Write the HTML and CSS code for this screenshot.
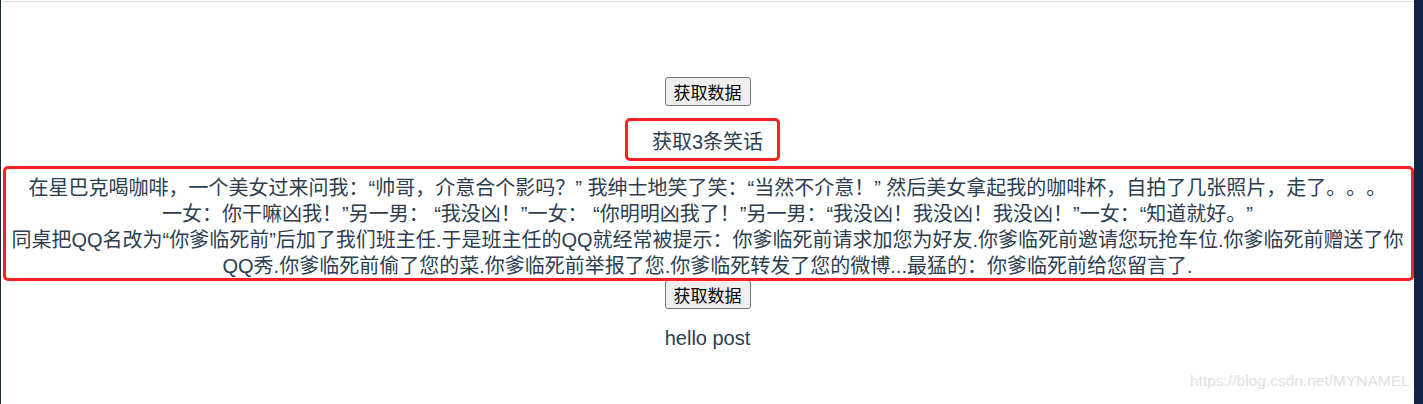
FILE: index.html
```html
<!DOCTYPE html>
<html lang="zh-CN">

<head>
    <meta charset="UTF-8">
    <meta name="viewport" content="width=device-width, initial-scale=1.0">
    <title>获取数据</title>
    <link rel="stylesheet" href="styles.css">
</head>

<body>
    <div class="page">
        <div class="topline"></div>
        <div id="app">
            <button type="button">获取数据</button>
            <p class="title">获取3条笑话<span class="mark mark-title"></span></p>
            <div class="jokes">
                <div>在星巴克喝咖啡，一个美女过来问我：“帅哥，介意合个影吗？” 我绅士地笑了笑：“当然不介意！” 然后美女拿起我的咖啡杯，自拍了几张照片，走了。。。</div>
                <div>一女：你干嘛凶我！”另一男： “我没凶！”一女： “你明明凶我了！”另一男：“我没凶！我没凶！我没凶！”一女：“知道就好。”</div>
                <div>同桌把QQ名改为“你爹临死前”后加了我们班主任.于是班主任的QQ就经常被提示：你爹临死前请求加您为好友.你爹临死前邀请您玩抢车位.你爹临死前赠送了你QQ秀.你爹临死前偷了您的菜.你爹临死前举报了您.你爹临死转发了您的微博...最猛的：你爹临死前给您留言了.</div>
                <span class="mark mark-jokes"></span>
            </div>
            <button type="button">获取数据</button>
            <p class="hello">hello post</p>
        </div>
        <div class="watermark">https://blog.csdn.net/MYNAMEL</div>
    </div>
</body>

</html>
```

FILE: styles.css
```css
body {
    margin: 0;
    height: 404px;
    overflow: hidden;
    background-color: #0d2444;
    border-left: 1px solid #1c2a31;
}

.page {
    position: relative;
    width: 1413px;
    height: 404px;
    background-color: #fff;
    overflow: hidden;
}

.topline {
    height: 1px;
    margin: 1px 0 0 1px;
    background-color: #dcdcdc;
}

#app {
    padding-top: 75px;
    text-align: center;
    color: #2c3e50;
    font-family: "Liberation Sans", "Noto Sans CJK SC", sans-serif;
    font-size: 20px;
    line-height: 26px;
    text-spacing-trim: space-all;
}

button {
    display: block;
    margin: 0 auto;
    box-sizing: border-box;
    height: 29px;
    padding: 0 8px;
    font-family: "Noto Sans CJK SC", sans-serif;
    font-size: 17px;
    line-height: 26px;
    color: #000;
    background-color: #efefef;
    border: 1px solid #767676;
    border-radius: 3px;
}

p {
    margin: 0;
}

.title {
    position: relative;
    margin-top: 23px;
}

.jokes {
    position: relative;
    margin: 20px 0 1px;
}

.hello {
    margin-top: 16px;
}

/* red marks drawn over the screenshot */
.mark {
    position: absolute;
    border: 3px solid #ff2020;
    border-radius: 5px;
}

.mark-title {
    left: 624px;
    top: -11px;
    width: 149px;
    height: 37px;
}

.mark-jokes {
    left: 2px;
    right: 0;
    top: -9px;
    bottom: -2px;
}

.watermark {
    position: absolute;
    left: 1189px;
    top: 372px;
    white-space: nowrap;
    font-family: "Liberation Sans", sans-serif;
    font-size: 15.5px;
    color: #e0e0e0;
}
```
